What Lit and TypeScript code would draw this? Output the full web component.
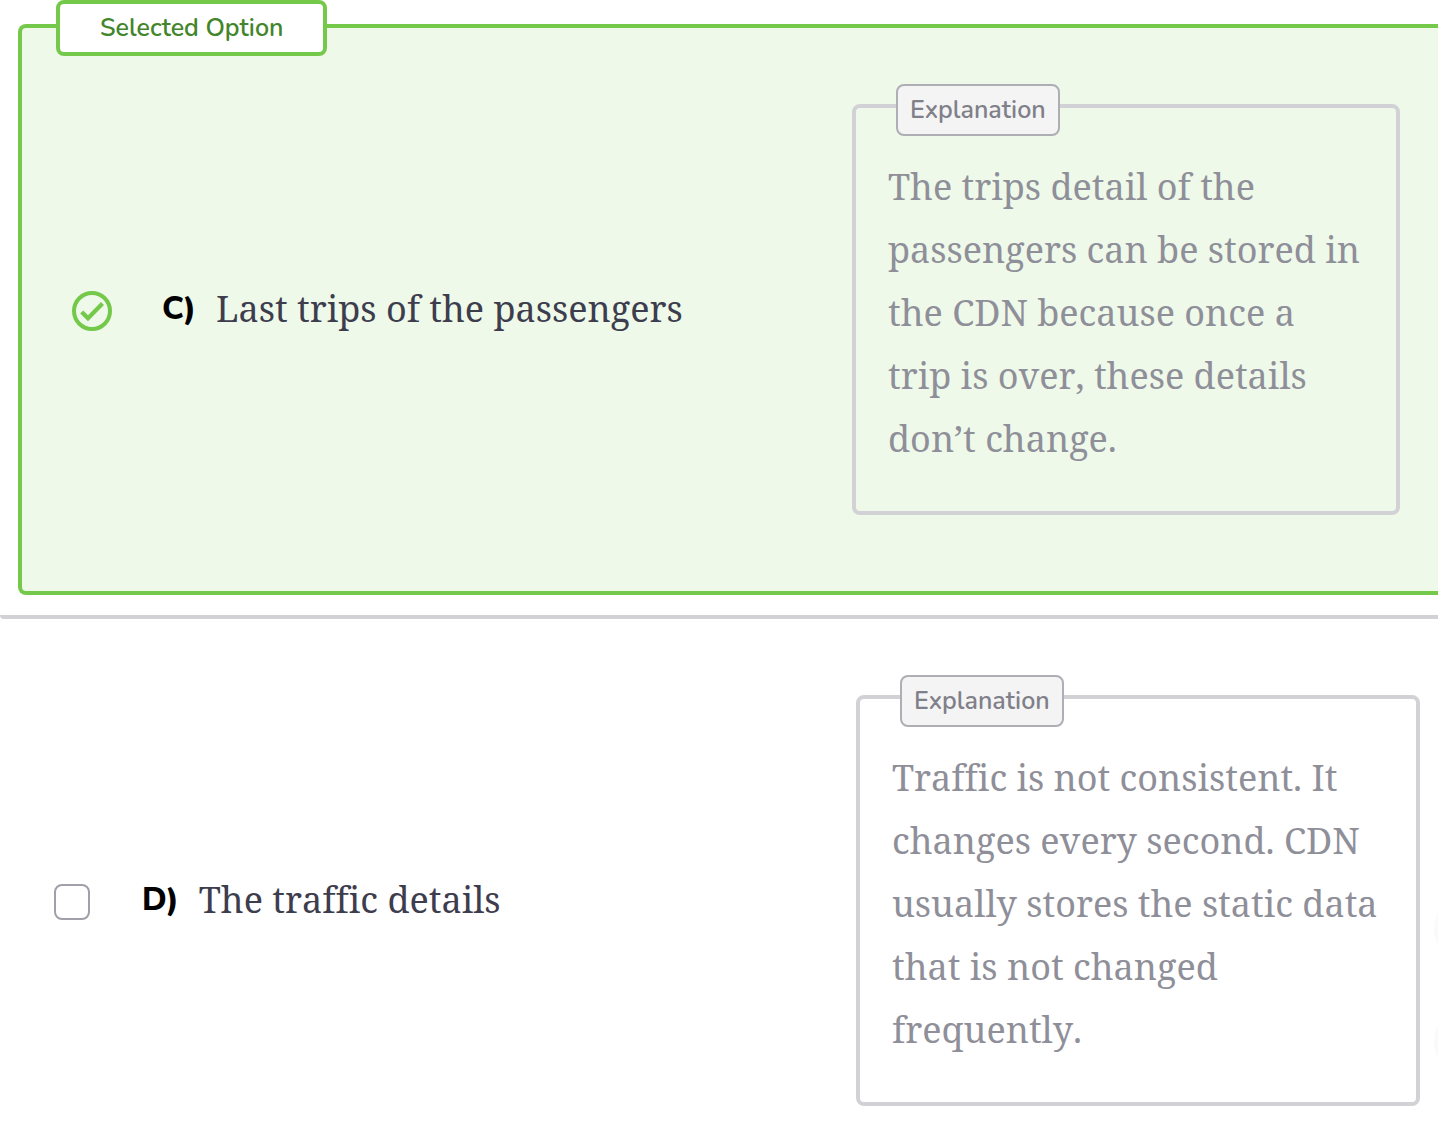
import { LitElement, html, css, svg } from "lit";
import { customElement, property } from "lit/decorators.js";

interface Option {
  letter: string;
  text: string;
  explanation: string;
  selected: boolean;
}

const OPTIONS: Option[] = [
  {
    letter: "C",
    text: "Last trips of the passengers",
    explanation:
      "The trips detail of the passengers can be stored in the CDN because once a trip is over, these details don’t change.",
    selected: true,
  },
  {
    letter: "D",
    text: "The traffic details",
    explanation:
      "Traffic is not consistent. It changes every second. CDN usually stores the static data that is not changed frequently.",
    selected: false,
  },
];

const checkMark = svg`<path d="M8.2 22.6 11.2 19.4 16 24.2 29 11 32 14 16 30.2Z" fill="#75c94a"></path>`;

@customElement("explanation-card")
export class ExplanationCard extends LitElement {
  static styles = css`
    :host {
      display: block;
    }
    .card {
      position: relative;
      padding: 47px 32px 41px;
      border: 4px solid #d1d1d6;
      border-radius: 8px;
    }
    .badge {
      position: absolute;
      top: -24px;
      left: 40px;
      padding: 0 12px;
      border: 2px solid #aeaeb5;
      border-radius: 8px;
      background: #f4f4f5;
      color: #808089;
      font: 600 25px/48px "Nunito", "Open Sans", sans-serif;
    }
    .text {
      margin: 0;
      color: #8f8f99;
      font: 36px/63px "Noto Serif", "DejaVu Serif Condensed", "DejaVu Serif", serif;
      font-kerning: none;
      font-variant-ligatures: none;
    }
  `;

  @property() text = "";

  render() {
    return html`
      <section class="card">
        <span class="badge">Explanation</span>
        <p class="text">${this.text}</p>
      </section>
    `;
  }
}

@customElement("quiz-option")
export class QuizOption extends LitElement {
  static styles = css`
    :host {
      display: block;
    }
    .row {
      position: relative;
      display: grid;
      align-items: center;
    }
    .selected {
      grid-template-columns: minmax(0, 780fr) minmax(0, 548fr);
      margin: 24px 0 20px 18px;
      padding: 76px 38px 76px 50px;
      border: 4px solid #75c94a;
      border-right: 0;
      border-radius: 8px 0 0 8px;
      background: #eef9e9;
    }
    .plain {
      grid-template-columns: minmax(0, 802fr) minmax(0, 564fr);
      padding: 76px 18px 36px 54px;
    }
    .flag {
      position: absolute;
      top: -28px;
      left: 34px;
      padding: 0 40px;
      border: 4px solid #75c94a;
      border-radius: 8px;
      background: #fff;
      color: #42852a;
      font: 600 25px/48px "Nunito", "Open Sans", sans-serif;
    }
    .answer {
      display: flex;
      align-items: center;
      gap: 50px;
    }
    .plain .answer {
      gap: 52px;
    }
    .control {
      display: grid;
      flex: none;
      padding-top: 2px;
    }
    .control > * {
      grid-area: 1 / 1;
    }
    .box {
      appearance: none;
      box-sizing: border-box;
      width: 36px;
      height: 36px;
      margin: 0;
      border: 2px solid #a0a0a8;
      border-radius: 8px;
      background: #fff;
    }
    .box:checked {
      width: 40px;
      height: 40px;
      border: 4px solid #75c94a;
      border-radius: 50%;
      background: transparent;
    }
    .mark {
      display: none;
      width: 40px;
      height: 40px;
      pointer-events: none;
    }
    .box:checked + .mark {
      display: block;
    }
    .label {
      display: flex;
      align-items: center;
      gap: 20px;
      padding-bottom: 2px;
    }
    .letter {
      color: #000;
      font: 800 32px/63px "Nunito Sans", "Lato", sans-serif;
    }
    .text {
      color: #3d3d4e;
      font: 36px/63px "Noto Serif", "DejaVu Serif Condensed", "DejaVu Serif", serif;
      font-kerning: none;
      font-variant-ligatures: none;
    }
  `;

  @property({ attribute: false }) option!: Option;

  render() {
    const { letter, text, explanation, selected } = this.option;
    return html`
      <div class="row ${selected ? "selected" : "plain"}">
        ${selected ? html`<span class="flag">Selected Option</span>` : null}
        <div class="answer">
          <span class="control">
            <input class="box" type="checkbox" id="choice" .checked=${selected} />
            <svg class="mark" viewBox="0 0 40 40" aria-hidden="true">${checkMark}</svg>
          </span>
          <label class="label" for="choice">
            <span class="letter">${letter})</span>
            <span class="text">${text}</span>
          </label>
        </div>
        <explanation-card .text=${explanation}></explanation-card>
      </div>
    `;
  }
}

@customElement("app-root")
export class AppRoot extends LitElement {
  static styles = css`
    :host {
      display: flow-root;
      position: relative;
      overflow: hidden;
      background: #fff;
    }
    .divider {
      height: 4px;
      margin: 0;
      border: 0;
      border-radius: 0 0 0 4px;
      background: #d1d1d6;
    }
    .bubble {
      position: absolute;
      right: -72px;
      width: 76px;
      height: 76px;
      border-radius: 50%;
      background: #fafafa;
    }
    .upper {
      bottom: 175px;
    }
    .lower {
      bottom: 62px;
    }
  `;

  render() {
    return html`
      <quiz-option .option=${OPTIONS[0]}></quiz-option>
      <hr class="divider" />
      <quiz-option .option=${OPTIONS[1]}></quiz-option>
      <div class="bubble upper"></div>
      <div class="bubble lower"></div>
    `;
  }
}
